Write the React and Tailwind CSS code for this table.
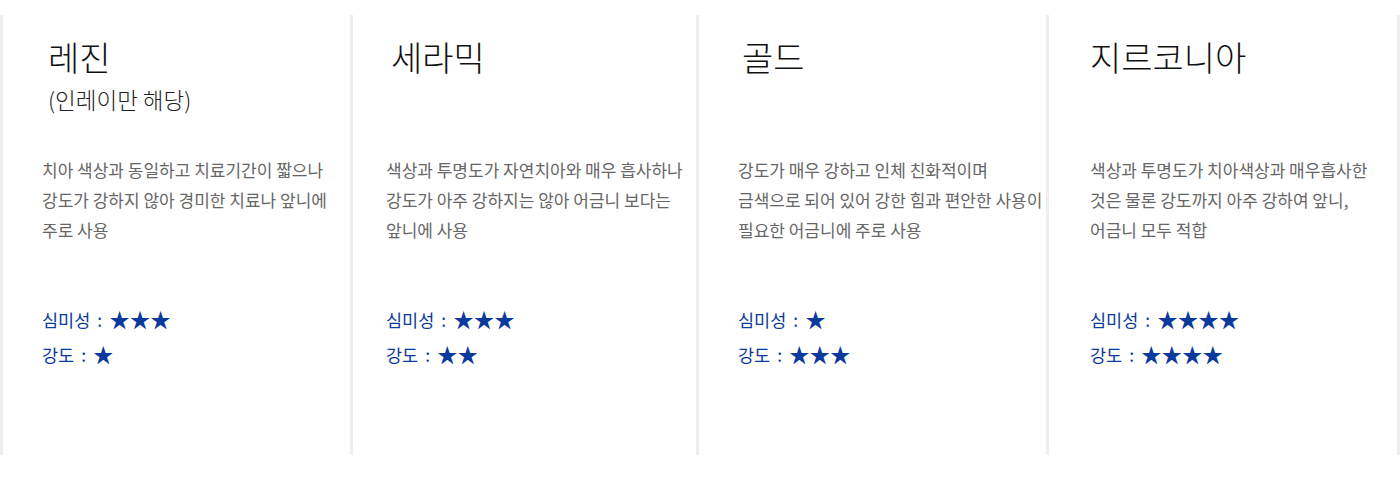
const cards = [
  {
    title: '레진',
    sub: '(인레이만 해당)',
    titleCls: 'pl-[45px]',
    bodyCls: 'pl-[39px]',
    width: 'w-[350px]',
    lines: ['치아 색상과 동일하고 치료기간이 짧으나', '강도가 강하지 않아 경미한 치료나 앞니에', '주로 사용'],
    beauty: 3,
    strength: 1,
  },
  {
    title: '세라믹',
    titleCls: 'pl-[38px]',
    bodyCls: 'pl-[33px]',
    width: 'w-[346px]',
    lines: ['색상과 투명도가 자연치아와 매우 흡사하나', '강도가 아주 강하지는 않아 어금니 보다는', '앞니에 사용'],
    beauty: 3,
    strength: 2,
  },
  {
    title: '골드',
    titleCls: 'pl-[43px]',
    bodyCls: 'pl-[39px]',
    width: 'w-[350px]',
    lines: ['강도가 매우 강하고 인체 친화적이며', '금색으로 되어 있어 강한 힘과 편안한 사용이', '필요한 어금니에 주로 사용'],
    beauty: 1,
    strength: 3,
  },
  {
    title: '지르코니아',
    titleCls: 'pl-[41px]',
    bodyCls: 'pl-[41px]',
    width: 'w-[354px] border-r-[3px]',
    lines: ['색상과 투명도가 치아색상과 매우흡사한', '것은 물론 강도까지 아주 강하여 앞니,', '어금니 모두 적합'],
    beauty: 4,
    strength: 4,
  },
]

const Stars = ({ n }) => (
  <span className="text-[20.5px]">{'★'.repeat(n)}</span>
)

const Rating = ({ label, n }) => (
  <div className="flex items-center">
    <span>{label}</span>
    <span className="mx-[7px]">:</span>
    <Stars n={n} />
  </div>
)

export default function App() {
  return (
    <div className="w-[1400px] h-[504px] bg-white pt-[15px] font-['Noto_Sans_CJK_KR',sans-serif]">
      <div className="flex h-[440px]">
        {cards.map((c) => (
          <div key={c.title} className={`${c.width} h-full border-l-[3px] border-[#eeeeee] flex flex-col pt-[20px]`}>
            {/* title */}
            <div className={`${c.titleCls} h-[120px] text-[#111]`}>
              <div className="text-[34px] leading-[44px] font-light">{c.title}</div>
              {c.sub && <div className="mt-[3px] text-[22.5px] leading-[34px] font-light text-[#222]">{c.sub}</div>}
            </div>

            {/* description */}
            <div className={`${c.bodyCls} text-[17px] leading-[30px] text-[#666] whitespace-nowrap`}>
              {c.lines.map((l) => (
                <div key={l}>{l}</div>
              ))}
            </div>

            {/* ratings */}
            <div className={`${c.bodyCls} mt-[57px] text-[17.5px] leading-[35px] text-[#0a3a9c] whitespace-nowrap`}>
              <Rating label="심미성" n={c.beauty} />
              <Rating label="강도" n={c.strength} />
            </div>
          </div>
        ))}
      </div>
    </div>
  )
}
